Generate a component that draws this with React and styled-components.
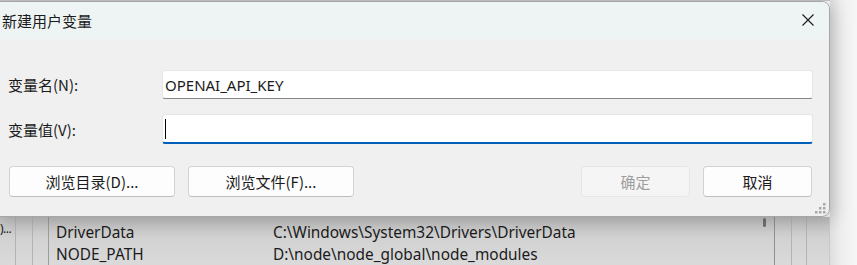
import React from "react";
import styled, { createGlobalStyle } from "styled-components";

const GlobalStyle = createGlobalStyle`
  html, body {
    margin: 0;
    padding: 0;
    background: #f5f5f5;
  }
  body {
    font-family: "Noto Sans", "Noto Sans CJK SC", sans-serif;
    color: #1b1b1b;
  }
`;

const Desktop = styled.div`
  position: relative;
  width: 857px;
  height: 265px;
  overflow: hidden;
  display: flex;
  background: #f5f5f5;
`;

const BackWindow = styled.div`
  width: 830px;
  height: 265px;
  display: flex;
  flex-direction: column;
  justify-content: flex-end;
  border-top: 1px solid #c4c4c4;
  box-sizing: border-box;
`;

const BackBody = styled.div`
  height: 48px;
  display: flex;
  background: linear-gradient(180deg, #bdbdbd 0%, #d2d2d2 45%, #dadada 100%);
`;

const SideCol = styled.div`
  width: ${(p) => p.$w}px;
  box-sizing: border-box;
  border-right: 1px solid ${(p) => p.$line || "#b3b3b3"};
  font-size: 12px;
  line-height: 12px;
  padding-top: 6px;
  white-space: nowrap;
  letter-spacing: -0.5px;
`;

const ListPane = styled.div`
  flex: 1;
  padding-top: 4px;
  display: flex;
  flex-direction: column;
`;

const ListRow = styled.div`
  height: 24px;
  display: flex;
  align-items: center;
  font-size: 15.4px;
  white-space: nowrap;
`;

const NameCell = styled.span`
  width: 217px;
  padding-left: 7px;
`;

const ScrollTrack = styled.div`
  width: 18px;
  padding-left: 6px;
  box-sizing: border-box;
  border-right: 1px solid #8f8f8f;
`;

const Thumb = styled.div`
  width: 3px;
  height: 9px;
  margin-top: 1px;
  border-radius: 2px;
  background: #6f6f6f;
`;

const Shade = styled.div`
  flex: 1;
  background: linear-gradient(90deg, #dedede 0%, #ededed 40%, #f7f7f7 100%);
`;

const Dialog = styled.div`
  position: absolute;
  left: -1px;
  top: 1px;
  width: 831px;
  box-sizing: border-box;
  border: 1px solid #a6a6a6;
  border-radius: 0 8px 8px 0;
  background: #f0f0f0;
  box-shadow: 4px 4px 16px rgba(0, 0, 0, 0.16);
  overflow: hidden;
`;

const TitleBar = styled.div`
  height: 37px;
  display: flex;
  align-items: center;
  justify-content: space-between;
  padding: 0 15px 0 2px;
  background: #eef4f4;
  font-family: "Noto Sans CJK SC", sans-serif;
  font-size: 15px;
`;

const Title = styled.span`
  margin-top: -1px;
`;

const CloseIcon = styled.svg`
  width: 12px;
  height: 12px;
  margin-top: -1px;
`;

const Body = styled.div`
  padding: 31px 16px 19px 8px;
`;

const FieldGrid = styled.div`
  display: grid;
  grid-template-columns: 154px 1fr;
  row-gap: 15px;
  align-items: center;
`;

const Label = styled.label`
  font-family: "Noto Sans CJK SC", sans-serif;
  font-size: 15px;
`;

const Field = styled.div`
  height: ${(p) => (p.$focus ? 30 : 29)}px;
  box-sizing: border-box;
  display: flex;
  align-items: center;
  padding-left: 2px;
  background: #ffffff;
  border: 1px solid #e6e6e6;
  border-bottom: ${(p) => (p.$focus ? "2px solid #005fb8" : "1px solid #868686")};
  border-radius: 3px;
  font-size: 15px;
`;

const Caret = styled.span`
  width: 1px;
  height: 20px;
  background: #000;
`;

const ButtonRow = styled.div`
  display: flex;
  gap: 12px;
  margin-top: 22px;
  padding: 0 1px 0 1px;
`;

const Spacer = styled.div`
  flex: 1;
`;

const Button = styled.button`
  width: ${(p) => p.$w}px;
  height: 31px;
  box-sizing: border-box;
  border-radius: 4px;
  border: 1px solid ${(p) => (p.disabled ? "#e6e6e6" : "#d3d3d3")};
  border-bottom-color: ${(p) => (p.disabled ? "#e6e6e6" : "#bdbdbd")};
  background: ${(p) => (p.disabled ? "#f5f5f5" : "#fdfdfd")};
  color: ${(p) => (p.disabled ? "#9d9d9d" : "#1b1b1b")};
  font-family: "Noto Sans CJK SC", sans-serif;
  font-size: 15px;
  padding: 0;
  & + & {
    margin-left: ${(p) => p.$extra || 0}px;
  }
`;

const Gripper = styled.svg`
  position: absolute;
  right: 3px;
  bottom: 2px;
  width: 11px;
  height: 11px;
`;

export default function App() {
  return (
    <>
      <GlobalStyle />
      <Desktop>
        <BackWindow>
          <BackBody>
            <SideCol $w={16}>)...</SideCol>
            <SideCol $w={17} />
            <SideCol $w={16} $line="#9c9c9c" />
            <ListPane>
              <ListRow>
                <NameCell>DriverData</NameCell>
                <span>C:\Windows\System32\Drivers\DriverData</span>
              </ListRow>
              <ListRow>
                <NameCell>NODE_PATH</NameCell>
                <span>D:\node\node_global\node_modules</span>
              </ListRow>
            </ListPane>
            <ScrollTrack>
              <Thumb />
            </ScrollTrack>
            <SideCol $w={17} />
            <SideCol $w={15} />
            <SideCol $w={23} $line="#c8c8c8" />
          </BackBody>
        </BackWindow>
        <Shade />

        <Dialog>
          <TitleBar>
            <Title>新建用户变量</Title>
            <CloseIcon viewBox="0 0 12 12">
              <path d="M0.5 0.5 L11.5 11.5 M11.5 0.5 L0.5 11.5" stroke="#1b1b1b" strokeWidth="1.1" fill="none" />
            </CloseIcon>
          </TitleBar>
          <Body>
            <FieldGrid>
              <Label>变量名(N):</Label>
              <Field>OPENAI_API_KEY</Field>
              <Label>变量值(V):</Label>
              <Field $focus>
                <Caret />
              </Field>
            </FieldGrid>
            <ButtonRow>
              <Button $w={166}>浏览目录(D)...</Button>
              <Button $w={166}>浏览文件(F)...</Button>
              <Spacer />
              <Button $w={109} disabled>
                确定
              </Button>
              <Button $w={109} $extra={1}>取消</Button>
            </ButtonRow>
          </Body>
          <Gripper viewBox="0 0 11 11">
            <g fill="#a8a8a8">
              <rect x="8" y="0" width="2.5" height="2.5" />
              <rect x="4" y="4" width="2.5" height="2.5" />
              <rect x="8" y="4" width="2.5" height="2.5" />
              <rect x="0" y="8" width="2.5" height="2.5" />
              <rect x="4" y="8" width="2.5" height="2.5" />
              <rect x="8" y="8" width="2.5" height="2.5" />
            </g>
          </Gripper>
        </Dialog>
      </Desktop>
    </>
  );
}
